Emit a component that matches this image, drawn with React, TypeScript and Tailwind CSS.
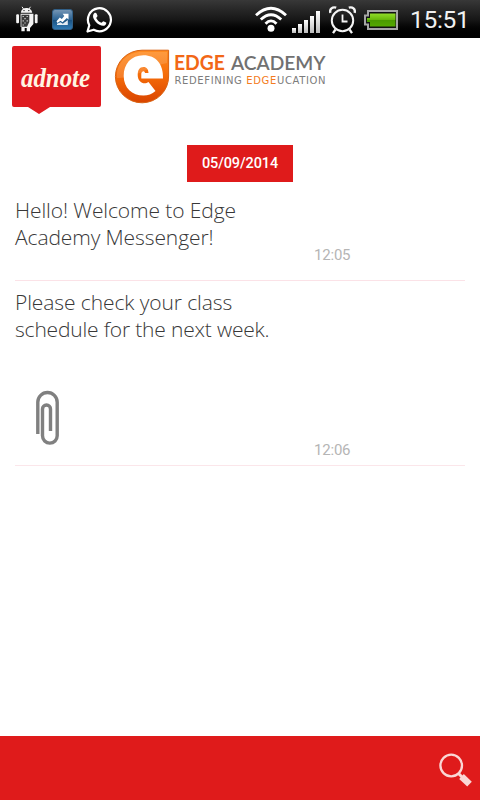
const messages = [
  {
    lines: [
      { text: "Hello! Welcome to Edge", spacing: "tracking-[-0.1px]" },
      { text: "Academy Messenger!", spacing: "tracking-[-0.1px]" },
    ],
    time: "12:05",
    attachment: false,
  },
  {
    lines: [
      { text: "Please check your class", spacing: "tracking-[-0.1px]" },
      { text: "schedule for the next week.", spacing: "tracking-[-0.18px]" },
    ],
    time: "12:06",
    attachment: true,
  },
]

function DebugIcon() {
  return (
    <svg className="ml-4 h-[26px] w-[22px]" viewBox="0 0 22 26" fill="#f4f4f4">
      <path d="M6 0.8L7.7 3.2M14.5 0.8L12.8 3.2" stroke="#f4f4f4" strokeWidth="1" />
      <path d="M4.8 6.8C5 3.8 7.3 2 10.3 2S16 3.8 16.2 6.8Z" />
      <circle cx="8" cy="4.6" r="0.7" fill="#111" />
      <circle cx="12.8" cy="4.6" r="0.7" fill="#111" />
      <rect x="0.2" y="8.3" width="2.8" height="9" rx="1" />
      <rect x="18.8" y="8.3" width="2.8" height="9" rx="1" />
      <path d="M4.6 7.8H17.4V18L14 22V25.3H10.7V22H8.7V25.3H5.4V21H4.6Z" />
      <path d="M5.4 8.8H13.3V16L11 20.7H5.4Z" fill="#3b3b3b" />
      <path d="M6.5 10.5h1.5M10.5 10.5h1.5M8.3 12.7h1.5M6.5 14.8h1.5M10.5 14.8h1.5M8.3 17h1.5M6.5 19h1.5" stroke="#bbb" strokeWidth="1.2" />
    </svg>
  )
}

function TrendIcon() {
  return (
    <svg className="ml-[13.5px] h-[21px] w-[21px]" viewBox="0 0 21 21">
      <defs>
        <linearGradient id="trend" x1="0" y1="0" x2="0" y2="1">
          <stop offset="0" stopColor="#7897b5" />
          <stop offset="0.5" stopColor="#2c6495" />
          <stop offset="0.52" stopColor="#19507f" />
          <stop offset="1" stopColor="#337db7" />
        </linearGradient>
      </defs>
      <rect x="0.5" y="0.5" width="20" height="20" rx="2.5" fill="url(#trend)" stroke="#315f87" />
      <path d="M4.5 12.3L7.8 8.4L9.8 10L12.3 7L10.7 4.8H16.5V10.5L14.8 9L10.5 13.2L8.5 11.7L5.5 14Z" fill="#fff" />
      <path d="M5 14.8L8.5 13.2L10.8 14.7L15.8 11V16H5Z" fill="#e4ecf3" />
    </svg>
  )
}

function WhatsAppIcon() {
  return (
    <svg className="ml-[13px] h-[27px] w-[27px]" viewBox="0 0 27 27" fill="none">
      <path d="M1.5 25.5L3.3 19.2A11.5 11.5 0 1 1 7.7 23.7Z" stroke="#fff" strokeWidth="2.2" strokeLinejoin="round" />
      <path
        d="M8.4 7.1C9 6.5 10 6.4 10.4 7.2L11.5 9.7C11.7 10.4 10.4 11.5 10.2 12C11.3 14.3 13.1 15.9 15.4 16.7C16 16.5 16.8 15.2 17.4 15.2L20.1 16.6C20.7 17 20 19.2 18.3 19.7C15.8 20.4 12.5 18.7 10.1 16.3C7.3 13.2 5.8 9.6 8.4 7.1Z"
        fill="#fff"
      />
    </svg>
  )
}

function WifiIcon() {
  return (
    <svg className="ml-auto h-[26px] w-[32px]" viewBox="0 0 32 26" fill="none" stroke="#fff" strokeWidth="2.8">
      <path d="M1 9.2Q16 -4.7 31 9.2" />
      <path d="M5.8 13.6Q16 3.8 26.2 13.6" />
      <path d="M10.5 17.8Q16 12 21.5 17.8" />
      <circle cx="16" cy="22.3" r="3.5" fill="#fff" stroke="none" />
    </svg>
  )
}

function SignalIcon() {
  return (
    <svg className="mt-1.5 ml-[5px] h-[22px] w-[29px]" viewBox="0 0 29 22">
      <defs>
        <linearGradient id="signal" x1="0" y1="0" x2="0" y2="1">
          <stop offset="0" stopColor="#fff" />
          <stop offset="1" stopColor="#bbb" />
        </linearGradient>
      </defs>
      <g fill="url(#signal)">
        <rect x="0" y="17" width="4" height="5" />
        <rect x="6" y="13" width="4" height="9" />
        <rect x="12" y="9" width="4" height="13" />
        <rect x="18" y="5" width="4" height="17" />
        <rect x="24" y="0" width="4" height="22" />
      </g>
    </svg>
  )
}

function AlarmIcon() {
  return (
    <svg className="mt-0.5 ml-[8px] h-[28px] w-[27px]" viewBox="0 0 27 28" fill="none" stroke="#f4f4f4">
      <circle cx="13.5" cy="14.5" r="10.7" strokeWidth="2" />
      <path d="M13.5 8.5V15.5H18.5" strokeWidth="1.8" />
      <path d="M1.4 6.8C0.3 3 3.5 0.5 7.2 1.7M25.6 6.8C26.7 3 23.5 0.5 19.8 1.7" strokeWidth="2.4" />
      <path d="M6.5 23.5L4 27.2M20.5 23.5L23 27.2" strokeWidth="2.3" />
    </svg>
  )
}

function BatteryIcon() {
  return (
    <svg className="mt-px ml-[8px] h-[20px] w-[34px]" viewBox="0 0 34 20">
      <defs>
        <linearGradient id="battery" x1="0" y1="0" x2="0" y2="1">
          <stop offset="0" stopColor="#91dc28" />
          <stop offset="0.48" stopColor="#68b90a" />
          <stop offset="0.5" stopColor="#4a9900" />
          <stop offset="1" stopColor="#55a900" />
        </linearGradient>
      </defs>
      <path d="M4 1H33V19H4V14.5H1V5.5H4Z" fill="#111" stroke="#a5a5a5" strokeWidth="2" />
      <path d="M6 3.5H31.5V16.5H6V12H3V8H6Z" fill="url(#battery)" />
    </svg>
  )
}

function StatusBar() {
  return (
    <div className="flex h-[38px] shrink-0 items-center bg-gradient-to-b from-[#383838] via-[#181818] to-black">
      <DebugIcon />
      <TrendIcon />
      <WhatsAppIcon />
      <WifiIcon />
      <SignalIcon />
      <AlarmIcon />
      <BatteryIcon />
      <span className="mt-px mr-[10px] ml-[12px] w-[60px] font-[Roboto,sans-serif] text-[24.5px] leading-[38px] tracking-[-0.3px] text-[#f1f1f1]">
        15:51
      </span>
    </div>
  )
}

function AdnoteLogo() {
  return (
    <svg className="mt-2 ml-3 h-[68px] w-[89px]" viewBox="0 0 89 68">
      <path d="M2 0H87Q89 0 89 2V59Q89 61 87 61H38L27 68L16 61H2Q0 61 0 59V2Q0 0 2 0Z" fill="#df1b20" />
      <text
        x="9"
        y="41"
        textLength="69"
        lengthAdjust="spacingAndGlyphs"
        fill="#fff5e3"
        className="font-['Liberation_Serif',serif] text-[27px] font-bold italic"
      >
        adnote
      </text>
    </svg>
  )
}

function EdgeLogo() {
  return (
    <svg className="mt-[10px] ml-[13px] h-[56px] w-[220px]" viewBox="0 0 220 56">
      <defs>
        <linearGradient id="edge" x1="0" y1="0" x2="0" y2="1">
          <stop offset="0" stopColor="#ff8c20" />
          <stop offset="0.5" stopColor="#f46a08" />
          <stop offset="1" stopColor="#d94400" />
        </linearGradient>
      </defs>
      <path d="M28 2.2H54.6V28A26.6 26.3 0 1 1 28 2.2Z" fill="url(#edge)" stroke="#d96312" />
      <path d="M3 30C2 14 14 4 28 4H53V15C38 17 20 31 3 30Z" fill="#fff" opacity="0.14" />
      <path
        d="M49 30.5C49.5 16 42 7.3 29.5 7.3C17 7.3 9.7 16 9.7 28C9.7 40 18 47.5 29.5 47.5C34 47.5 38 46 41.5 43L34.5 34C30 37.5 23.7 34 23.7 27C23.7 22 25.5 19 29.5 19C32.8 19 34.3 21.5 34.5 25H31C30.8 22.4 27.3 22.8 27.3 26V30.5Z"
        fill="#fff"
      />
      <text
        x="60"
        y="21.5"
        textLength="51"
        lengthAdjust="spacingAndGlyphs"
        fill="#f26716"
        className="font-[Lato,sans-serif] text-[20px] font-bold"
      >
        EDGE
      </text>
      <text
        x="117"
        y="21.5"
        textLength="94.5"
        lengthAdjust="spacingAndGlyphs"
        fill="#717171"
        className="font-[Lato,sans-serif] text-[20px] font-semibold"
      >
        ACADEMY
      </text>
      <text
        x="60.5"
        y="36"
        textLength="151"
        fill="#7c7c7c"
        className="font-['DejaVu_Sans',sans-serif] text-[10px]"
      >
        REDEFINING <tspan fill="#f47b20">EDGE</tspan>UCATION
      </text>
    </svg>
  )
}

function Paperclip() {
  return (
    <svg className="mt-[47px] ml-[20px] h-[56px] w-[25px]" viewBox="0 0 25 56" fill="none" stroke="#808080" strokeWidth="3.4">
      <path d="M2.8 44V12.2A9.7 9.7 0 0 1 22.2 12.2V45.8A7.35 7.35 0 0 1 7.5 45.8V19A4 4 0 0 1 15.5 19V41" />
    </svg>
  )
}

export default function App() {
  return (
    <div className="flex h-[800px] w-[480px] flex-col overflow-hidden bg-white font-[Roboto,sans-serif]">
      <StatusBar />
      <header className="flex h-[107px] shrink-0 items-start">
        <AdnoteLogo />
        <EdgeLogo />
      </header>
      <main className="flex flex-1 flex-col">
        <div className="mx-auto h-[37px] w-[106px] shrink-0 bg-[#df1b1b] text-center text-[14.5px] leading-[38px] font-medium tracking-[-0.1px] text-white">
          05/09/2014
        </div>
        <div className="mx-[15px] mt-[7px]">
          {messages.map((message) => (
            <div
              key={message.time}
              className={
                message.attachment
                  ? "flex h-[185px] items-end border-b border-[#fbe6ea]"
                  : "flex h-[92px] items-end border-b border-[#fbe2e7]"
              }
            >
              <div className="w-[299px] self-stretch pt-[8px] font-['Open_Sans',sans-serif] text-[21px] leading-[27px] font-light whitespace-nowrap text-[#383838]">
                {message.lines.map((line) => (
                  <p key={line.text} className={line.spacing}>
                    {line.text}
                  </p>
                ))}
                {message.attachment && <Paperclip />}
              </div>
              <time
                className={
                  message.attachment
                    ? "mb-[5px] text-[15px] leading-5 tracking-[-0.2px] text-[#b5b5b5]"
                    : "mb-[15px] text-[15px] leading-5 tracking-[-0.2px] text-[#b5b5b5]"
                }
              >
                {message.time}
              </time>
            </div>
          ))}
        </div>
      </main>
      <footer className="flex h-16 shrink-0 items-start justify-end bg-[#df1b1b]">
        <button aria-label="Search" className="mt-[17px] mr-[7px]">
          <svg className="h-[35px] w-[35px]" viewBox="0 0 35 35" fill="none" stroke="#fad7d5">
            <circle cx="13.2" cy="12.5" r="10.8" strokeWidth="2.3" />
            <path d="M20.5 20.5L24 24" strokeWidth="3" />
            <path d="M23.5 23.5L31.5 31.2" strokeWidth="6.6" />
          </svg>
        </button>
      </footer>
    </div>
  )
}
